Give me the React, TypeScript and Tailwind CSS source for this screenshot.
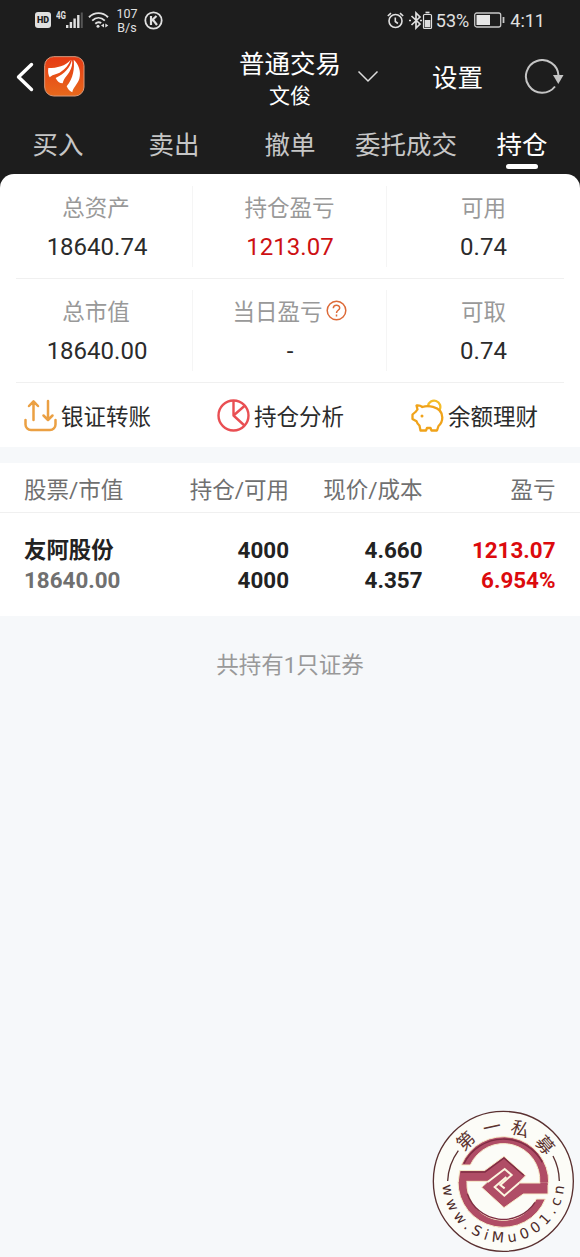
import clsx from "clsx";

const tabs = ["买入", "卖出", "撤单", "委托成交", "持仓"];

const summary = [
    [
        { label: "总资产", value: "18640.74" },
        { label: "持仓盈亏", value: "1213.07", red: true },
        { label: "可用", value: "0.74" },
    ],
    [
        { label: "总市值", value: "18640.00" },
        { label: "当日盈亏", value: "-", help: true },
        { label: "可取", value: "0.74" },
    ],
];

const StatusBar = () => (
    <div className="flex h-10 items-center justify-between pl-[35px] pr-[35px] text-[#e0e0e0]">
        <div className="flex items-center">
            <span className="flex h-4 w-4 items-center justify-center rounded-[3px] bg-[#e0e0e0] text-[9px] font-black leading-none text-[#1d1d1d]">
                HD
            </span>
            <svg className="ml-[5px]" width="28" height="20" viewBox="0 0 28 20">
                <text x="0" y="9" fontSize="10" fontWeight="700" fill="#e0e0e0" textLength="10" lengthAdjust="spacingAndGlyphs">4G</text>
                <g fill="#e0e0e0">
                    <rect x="10" y="15" width="2.4" height="3" />
                    <rect x="13.7" y="12" width="2.4" height="6" />
                    <rect x="17.4" y="8.5" width="2.4" height="9.5" />
                    <rect x="21.1" y="5" width="2.4" height="13" />
                    <rect x="24.8" y="2.5" width="2" height="15.5" fill="#555" />
                </g>
            </svg>
            <svg className="ml-1" width="21" height="18" viewBox="0 0 21 18" fill="none" stroke="#e0e0e0" strokeWidth="1.9">
                <path d="M1 6.2C6.5 0.8 14.5 0.8 20 6.2" />
                <path d="M4.2 9.6C8 6 13 6 16.8 9.6" />
                <path d="M7.3 12.7C9.2 10.9 11.5 10.9 13.2 12" />
                <circle cx="10" cy="15.2" r="1.5" fill="#e0e0e0" stroke="none" />
                <path d="M16 12.5v4l-3-2zM17.3 12.5v4l3-2z" fill="#e0e0e0" stroke="none" />
            </svg>
            <span className="ml-[7px] w-[22px] pt-[2px] text-center text-[12.5px] leading-[14px]">
                107
                <br />
                B/s
            </span>
            <svg className="ml-[6px]" width="19" height="19" viewBox="0 0 19 19" fill="none" stroke="#e0e0e0">
                <circle cx="9.5" cy="9.5" r="8.2" strokeWidth="1.8" />
                <path d="M7 5v9M12.5 5L7.5 9.7M9 8.8l4 5.2" strokeWidth="2.2" />
            </svg>
        </div>
        <div className="flex items-center">
            <svg width="17" height="17" viewBox="0 0 17 17" fill="none" stroke="#e0e0e0" strokeWidth="1.6">
                <circle cx="8.5" cy="9" r="6.5" />
                <path d="M8.3 5.5v4l2.6 2M.8 4L4 1.2M16.2 4L13 1.2" />
            </svg>
            <svg className="ml-[5px]" width="25" height="19" viewBox="0 0 25 19" fill="none" stroke="#e0e0e0" strokeWidth="1.7">
                <path d="M2.5 5L11 13 7 17V2l4 4-8.5 8" />
                <path d="M0 9.5h2M11 9.5h2" />
                <rect x="14.5" y="3.5" width="8" height="14" rx="1" strokeWidth="1.2" />
                <path d="M16.5 1.5h4" />
                <path d="M15.7 9h5.6v7.3h-5.6z" fill="#e0e0e0" stroke="none" />
            </svg>
            <span className="ml-[2px] pt-px text-[18px] leading-5">53%</span>
            <svg className="ml-[5px]" width="31" height="16" viewBox="0 0 31 16" fill="none" stroke="#c8c8c8">
                <rect x=".7" y="1" width="26" height="14" rx="2" strokeWidth="1.3" />
                <path d="M2.5 3H16V13H2.5Z" fill="#e8e8e8" stroke="none" />
                <path d="M29.5 5v6" strokeWidth="1.8" />
            </svg>
            <span className="ml-[5px] pt-px text-[18px] leading-5">4:11</span>
        </div>
    </div>
);

const AppLogo = () => (
    <svg className="mb-px ml-[10px]" width="41" height="41" viewBox="0 0 123 123">
        <defs>
            <linearGradient id="logo" x1="0" y1="0" x2="0" y2="1">
                <stop offset="0" stopColor="#e63a14" />
                <stop offset="1" stopColor="#e8691c" />
            </linearGradient>
        </defs>
        <rect x="2" y="2" width="118" height="118" rx="27" fill="url(#logo)" stroke="#d89a7c" strokeWidth="3" />
        <g fill="#fff">
            <path d="M80 11C64 30 40 36 13 36C11 48 13 57 17 64C28 54 42 54 50 48C64 38 74 27 80 11Z" />
            <path d="M84 11C78 36 62 52 35 66C40 76 46 82 56 82C60 66 70 58 76 48C84 34 86 24 84 11Z" />
            <path d="M89 11C92 38 88 66 68 91C72 100 77 106 85 109C86 96 100 86 106 68C112 46 104 24 89 11Z" />
        </g>
    </svg>
);

const Header = () => (
    <div className="flex h-[74px] items-center pl-4 pr-[16px] text-white">
        <svg className="mb-px" width="18" height="30" viewBox="0 0 18 30" fill="none" stroke="#fff" strokeWidth="3.4" strokeLinecap="round" strokeLinejoin="round">
            <path d="M15.5 2.5L2.5 15 15.5 27.5" />
        </svg>
        <AppLogo />
        <div className="ml-[154px] flex w-[102px] flex-col items-center whitespace-nowrap pt-[5px]">
            <span className="text-[25.5px] leading-[33px]">普通交易</span>
            <span className="text-[21px] leading-[30px]">文俊</span>
        </div>
        <svg className="mb-px ml-[16px]" width="22" height="14" viewBox="0 0 22 14" fill="none" stroke="#ddd" strokeWidth="1.5">
            <path d="M1.5 1.5L11 11 20.5 1.5" />
        </svg>
        <span className="ml-[53px] pt-[2px] text-[25.5px] leading-8">设置</span>
        <svg className="ml-auto" width="40" height="36" viewBox="0 0 40 36" fill="none" stroke="#c4c4c4" strokeWidth="2">
            <path d="M34.5 16.5A16.3 16.3 0 1 0 31 27.5" />
            <path d="M29 16H39.5L34.3 25Z" fill="#c4c4c4" stroke="none" />
        </svg>
    </div>
);

const TransferIcon = () => (
    <svg width="33" height="33" viewBox="0 0 33 33" fill="none" stroke="#eba043" strokeWidth="2.5" strokeLinecap="round" strokeLinejoin="round">
        <path d="M9.5 21V3M5 7l4.5-4.7L14 7M24 2v18M19.5 16.5l4.5 4.5 4.5-4.5" />
        <path d="M1.5 21v4.5a5.5 5.5 0 0 0 5.5 5.5h19a5.5 5.5 0 0 0 5.5-5.5V21" />
    </svg>
);

const PieIcon = () => (
    <svg width="33" height="33" viewBox="0 0 33 33" fill="none" stroke="#e94f53" strokeWidth="2.4" strokeLinejoin="round">
        <circle cx="16.5" cy="16.5" r="15" />
        <path d="M16.5 1.5v15L28 6.5M16.5 16.5L28 27" />
    </svg>
);

const PiggyIcon = () => (
    <svg width="33" height="33" viewBox="0 0 33 33" fill="none" stroke="#f0a31a" strokeWidth="2.3" strokeLinecap="round" strokeLinejoin="round">
        <path d="M17 7a6.2 6.2 0 1 1 11.500 4" stroke="#f4bd28" />
        <path d="M5.5 6.5c2.300-.3 4.300.3 5.800 1.500C14.500 7 18.500 7 22 7.800c6 1.500 9.300 5.700 9.300 10.700 0 3.500-1.300 6.300-3.800 8.500l-1.500 4.500h-5.500l-1-2.500h-3.500l-1 2.500H9.500l-1-4.800C7 25.500 6 24 5.500 22.300L1.500 20v-4.500L5 12.500c.4-.8.8-1.300 1.500-2z" />
        <circle cx="11" cy="17" r="1.5" fill="#f0a31a" stroke="none" />
    </svg>
);

const actions = [
    { label: "银证转账", icon: <TransferIcon /> },
    { label: "持仓分析", icon: <PieIcon /> },
    { label: "余额理财", icon: <PiggyIcon /> },
];

const Summary = () => (
    <div className="rounded-t-[14px] bg-white">
        {summary.map((row, i) => (
            <div
                key={i}
                className={clsx(
                    "mx-4 grid grid-cols-[177px_194px_1fr] border-b border-[#f0f0f0] pb-[11px]",
                    i === 0 ? "h-[105px] pt-3" : "h-[104px] pt-[11px]"
                )}
            >
                {row.map((cell, j) => (
                    <div
                        key={cell.label}
                        className={clsx(
                            "flex flex-col items-center",
                            j < 2 && "border-r border-[#f5f5f5]",
                            j === 0 && "pr-4",
                            j === 2 && "pl-4"
                        )}
                    >
                        <div className="flex h-[42px] items-center text-[22.5px] leading-[44px] text-[#999]">
                            <span className="pt-[2px]">{cell.label}</span>
                            {cell.help && (
                                <svg className="mb-px ml-[3px]" width="21" height="21" viewBox="0 0 21 21" fill="none" stroke="#dd6a38" strokeWidth="1.5">
                                    <circle cx="10.5" cy="10.5" r="9.3" />
                                    <path d="M7.3 8.2C7.3 4.2 13.7 4.2 13.7 7.9C13.7 10.2 10.5 10.4 10.5 12.9M10.5 14.5v1.9" />
                                </svg>
                            )}
                        </div>
                        <div
                            className={clsx(
                                "text-[24px] leading-[38px]",
                                j === 0 && "pl-[2px]",
                                j === 1 && "pl-px",
                                cell.red ? "text-[#cd1013]" : "text-[#2b2b2b]"
                            )}
                        >
                            {cell.value}
                        </div>
                    </div>
                ))}
            </div>
        ))}
        <div className="grid h-[64px] grid-cols-[193px_194px_1fr] pl-6">
            {actions.map((action) => (
                <div key={action.label} className="flex items-center gap-1 text-[22.5px] text-[#2b2b2b]">
                    {action.icon}
                    <span className="whitespace-nowrap pt-[3px] leading-8">{action.label}</span>
                </div>
            ))}
        </div>
    </div>
);

const columns = "grid grid-cols-[132px_133px_133.5px_133px] px-6 [&>*:not(:first-child)]:text-right";

const Holdings = () => (
    <div className="mt-4 h-[153px] bg-white">
        <div className={clsx(columns, "h-[50px] border-b border-[#f0f0f0] text-[22.5px] leading-[54px] text-[#707070]")}>
            <span>股票/市值</span>
            <span>持仓/可用</span>
            <span>现价/成本</span>
            <span>盈亏</span>
        </div>
        <div className={clsx(columns, "pt-[21.5px] text-[22.4px] font-bold leading-[30.5px] text-[#222]")}>
            <div>
                友阿股份
                <div className="text-[#707070]">18640.00</div>
            </div>
            <div>
                4000
                <div>4000</div>
            </div>
            <div>
                4.660
                <div>4.357</div>
            </div>
            <div className="text-[#dc0a0d]">
                1213.07
                <div>6.954%</div>
            </div>
        </div>
    </div>
);

const sealChars = [
    { char: "第", angle: -43 },
    { char: "一", angle: -12 },
    { char: "私", angle: 18 },
    { char: "募", angle: 49 },
];

const Seal = () => (
    <svg className="absolute right-0 bottom-0" width="155" height="155" viewBox="0 0 465 465">
        <circle cx="235" cy="238" r="210" fill="#fcfcf7" stroke="#5a3030" strokeWidth="4" />
        <g fill="none" stroke="#5a3030" strokeWidth="4">
            <path d="M68 237A167 167 0 0 1 100 146" />
            <path d="M403 237A167 167 0 0 0 384 162" />
        </g>
        <g fill="#5c3430" fontSize="54" textAnchor="middle" className="font-['Noto_Sans_CJK_SC',sans-serif]">
            {sealChars.map((c) => (
                <text key={c.char} x="235" y="92" transform={`rotate(${c.angle} 235 238)`}>
                    {c.char}
                </text>
            ))}
        </g>
        <path id="seal-url" d="M52.2 230A183 183 0 1 0 417.8 230" fill="none" />
        <text fill="#4c2a28" fontSize="43" className="font-['DejaVu_Sans',sans-serif]">
            <textPath href="#seal-url" startOffset="20" textLength="550" lengthAdjust="spacing">www.SiMu001.cn</textPath>
        </text>
        <g transform="translate(90 91)" fill="#b04d66" stroke="#f7ebc8" strokeWidth="3">
            <path d="M19 98A136 136 0 0 1 281 152H254A109 109 0 0 0 46 98Z" />
            <path d="M271 200A136 136 0 0 1 9 147H36A109 109 0 0 0 244 200Z" />
            <path d="M14 115H88L147 72 212 130 190 152H279V185H205L147 226 80 165 100 147H10Z" />
            <path d="M12 145H34M256 154H278" stroke="#b04d66" strokeWidth="8" />
            <g fill="none" stroke="#7d2c41" strokeWidth="4">
                <path d="M27 94A132 132 0 0 1 262 90" />
                <path d="M18 119H90L147 77 206 129" />
                <path d="M37 184A114 114 0 0 0 240 210" />
            </g>
            <path d="M98 149L149 110 170 128 136 158 149 168M192 152L148 190 119 164 154 134" fill="none" stroke="#fcf6df" strokeWidth="6" />
        </g>
    </svg>
);

export default function App() {
    return (
        <div className="relative h-[1257px] w-[580px] overflow-hidden bg-[#f6f8fa] font-[Roboto,'Noto_Sans_CJK_SC',sans-serif]">
            <div className="bg-[#1d1d1d]">
                <StatusBar />
                <Header />
                <div className="grid h-[60px] grid-cols-5 text-center text-[25.5px] leading-[62px] text-[#c6c6c6]">
                    {tabs.map((tab) => (
                        <div key={tab} className={clsx("relative whitespace-nowrap", tab === "持仓" && "text-white")}>
                            {tab}
                            {tab === "持仓" && (
                                <span className="absolute bottom-[7px] left-[42px] h-[5px] w-8 rounded-full bg-white" />
                            )}
                        </div>
                    ))}
                </div>
                <Summary />
            </div>
            <Holdings />
            <p className="mt-[33px] text-center text-[22.5px] leading-8 text-[#999]">共持有1只证券</p>
            <Seal />
        </div>
    );
}
